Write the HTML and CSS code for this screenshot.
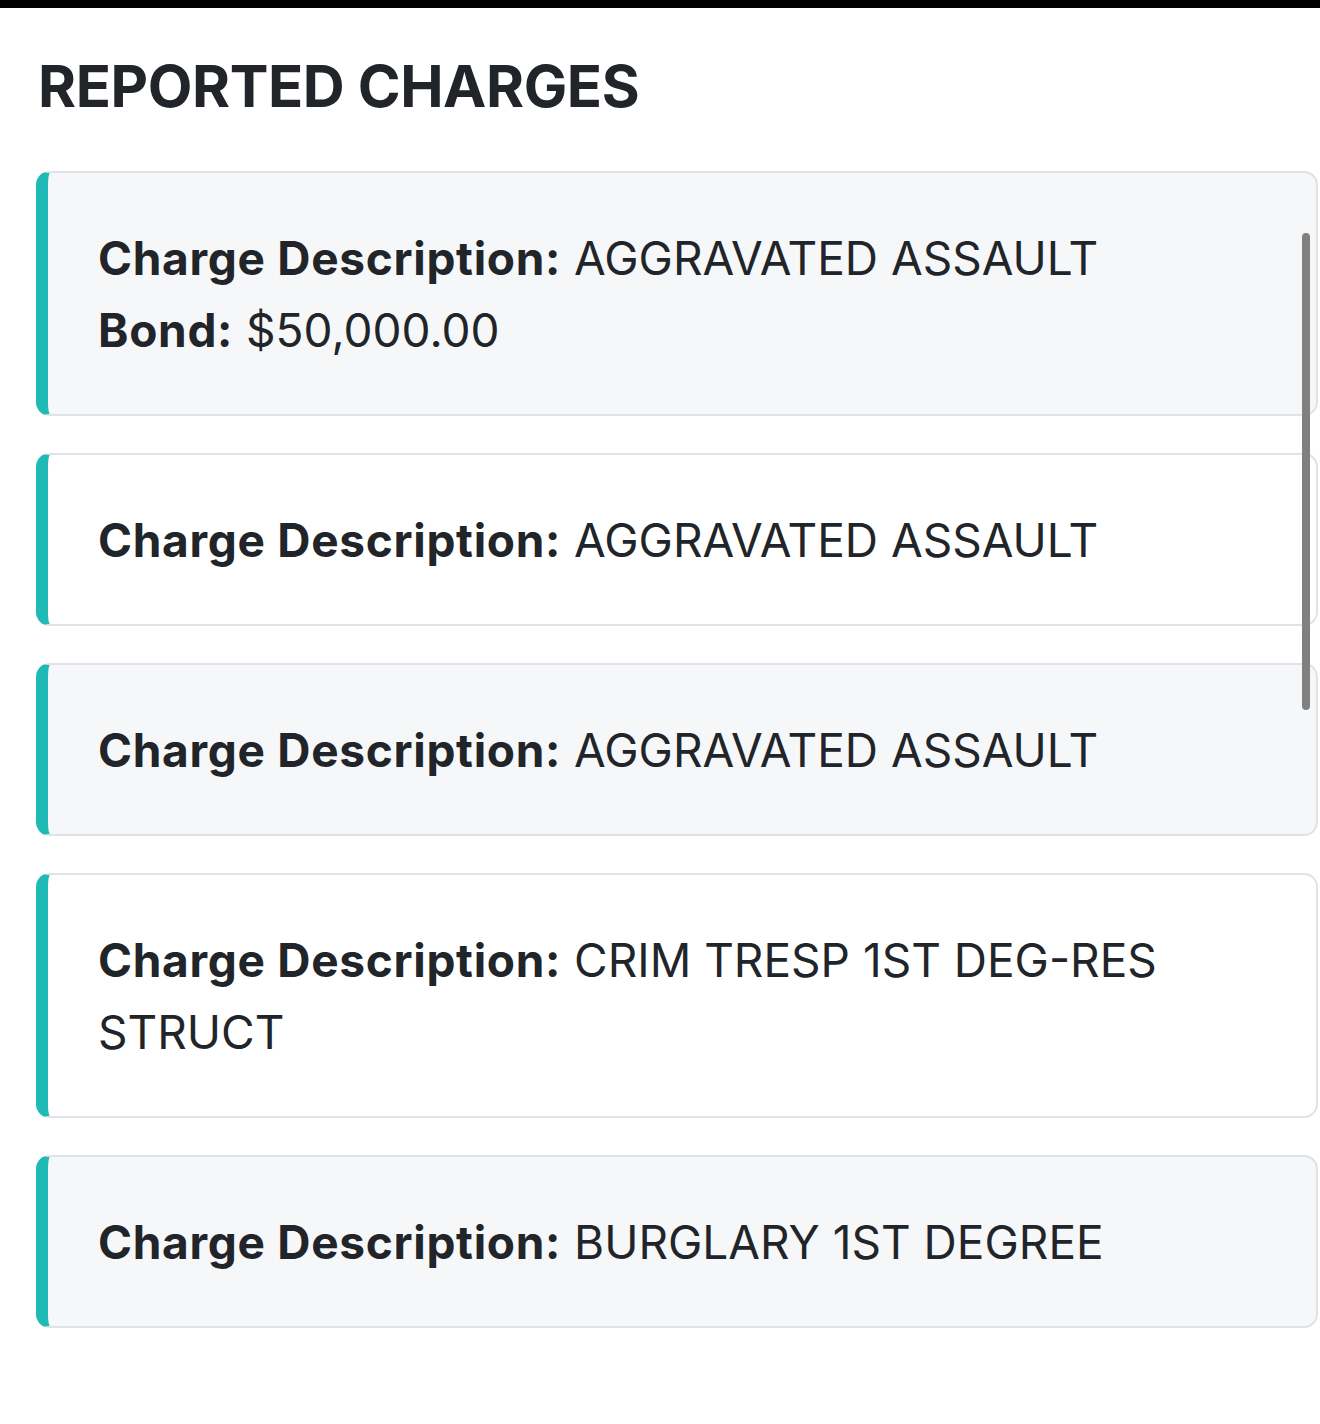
FILE: index.html
```html
<!DOCTYPE html>
<html lang="en">
<head>
    <meta charset="utf-8">
    <meta name="viewport" content="width=device-width, initial-scale=1">
    <title>Reported Charges</title>
    <link rel="stylesheet" href="styles.css">
</head>
<body>
    <div class="topbar"></div>
    <div class="page">
        <h2 class="title">REPORTED CHARGES</h2>

        <div class="charge-list">
            <div class="charge shaded">
                <div><b>Charge Description:</b> AGGRAVATED ASSAULT</div>
                <div><b>Bond:</b> $50,000.00</div>
            </div>
            <div class="charge">
                <div><b>Charge Description:</b> AGGRAVATED ASSAULT</div>
            </div>
            <div class="charge shaded">
                <div><b>Charge Description:</b> AGGRAVATED ASSAULT</div>
            </div>
            <div class="charge">
                <div><b>Charge Description:</b> CRIM TRESP 1ST DEG-RES STRUCT</div>
            </div>
            <div class="charge shaded">
                <div><b>Charge Description:</b> BURGLARY 1ST DEGREE</div>
            </div>
        </div>

        <div class="scroll-thumb"></div>
    </div>
</body>
</html>
```

FILE: styles.css
```css
body
{
    margin: 0;
    background: #ffffff;
    color: #212529;
    font-family: Inter, "Noto Sans", sans-serif;
}
.topbar
{
    height: 8px;
    background: #000000;
}
.page
{
    position: relative;
    padding: 0 2px 60px 36px;
}
.title
{
    margin: 0;
    padding: 44px 0 49px 2px;
    font-size: 58px;
    font-weight: 700;
    line-height: 1.2;
    letter-spacing: -0.4px;
}
.charge-list
{
    display: flex;
    flex-direction: column;
    gap: 37px;
}
.charge
{
    padding: 49px 48px 48px 50px;
    border: 2px solid #dfe2e6;
    border-left: 12px solid #1fb9b6;
    border-radius: 14px;
    background: #ffffff;
    font-size: 46px;
    line-height: 72px;
}
.charge.shaded
{
    background: #f6f7f9;
}
.charge b
{
    font-weight: 700;
    letter-spacing: 0.7px;
}
.scroll-thumb
{
    position: absolute;
    top: 225px;
    right: 10px;
    width: 8px;
    height: 477px;
    border-radius: 4px;
    background: #808080;
}
```
